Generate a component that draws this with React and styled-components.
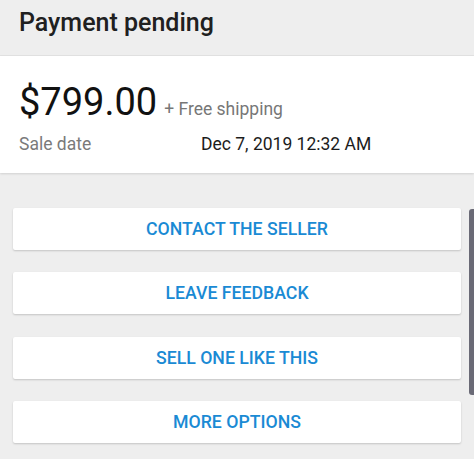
import React from "react";
import styled, { createGlobalStyle } from "styled-components";

const pageGray = "#eeeeee";
const accent = "#1a8ad4";

const GlobalStyle = createGlobalStyle`
  html, body {
    margin: 0;
    padding: 0;
    background: ${pageGray};
    font-family: Roboto, "Liberation Sans", sans-serif;
  }
`;

const Page = styled.div`
  position: relative;
  width: 474px;
  height: 459px;
  overflow: hidden;
  background: ${pageGray};
`;

const Header = styled.div`
  height: 56px;
  padding-left: 19px;
  display: flex;
  align-items: center;
  box-sizing: border-box;
  border-bottom: 1px solid #e2e2e2;
`;

const Title = styled.h1`
  margin: 0;
  margin-top: -11px;
  font-size: 25px;
  font-weight: 500;
  color: #202020;
`;

const Card = styled.div`
  background: #fff;
  height: 117px;
  box-sizing: border-box;
  padding: 24px 19px 0;
  box-shadow: 0 1px 2px rgba(0, 0, 0, 0.12);
`;

const PriceRow = styled.div`
  display: flex;
  align-items: baseline;
  gap: 7px;
`;

const Price = styled.span`
  font-size: 38px;
  color: #111;
  line-height: 44px;
`;

const Shipping = styled.span`
  font-size: 17.5px;
  color: #777;
`;

const InfoRow = styled.div`
  display: grid;
  grid-template-columns: 182px 1fr;
  margin-top: 10px;
  font-size: 17.5px;
`;

const Label = styled.span`
  color: #7a7a7a;
`;

const Value = styled.span`
  color: #1c1c1c;
`;

const Actions = styled.div`
  display: flex;
  flex-direction: column;
  gap: 22.3px;
  padding: 35px 13px 0;
`;

const ActionButton = styled.button`
  height: 42px;
  border: none;
  border-radius: 2px;
  background: #fff;
  box-shadow: 0 1px 2px rgba(0, 0, 0, 0.18);
  font-family: Roboto, "Liberation Sans", sans-serif;
  font-size: 17.7px;
  font-weight: 500;
  color: ${accent};
  cursor: pointer;
`;

const Scrollbar = styled.div`
  position: absolute;
  right: 0;
  top: 209px;
  width: 5px;
  height: 186px;
  border-radius: 3px 0 0 3px;
  background: #6a6a76;
`;

const actions = ["CONTACT THE SELLER", "LEAVE FEEDBACK", "SELL ONE LIKE THIS", "MORE OPTIONS"];

export default function App() {
  return (
    <Page>
      <GlobalStyle />
      <Header>
        <Title>Payment pending</Title>
      </Header>
      <Card>
        <PriceRow>
          <Price>$799.00</Price>
          <Shipping>+ Free shipping</Shipping>
        </PriceRow>
        <InfoRow>
          <Label>Sale date</Label>
          <Value>Dec 7, 2019 12:32 AM</Value>
        </InfoRow>
      </Card>
      <Actions>
        {actions.map((a) => (
          <ActionButton key={a}>{a}</ActionButton>
        ))}
      </Actions>
      <Scrollbar />
    </Page>
  );
}
